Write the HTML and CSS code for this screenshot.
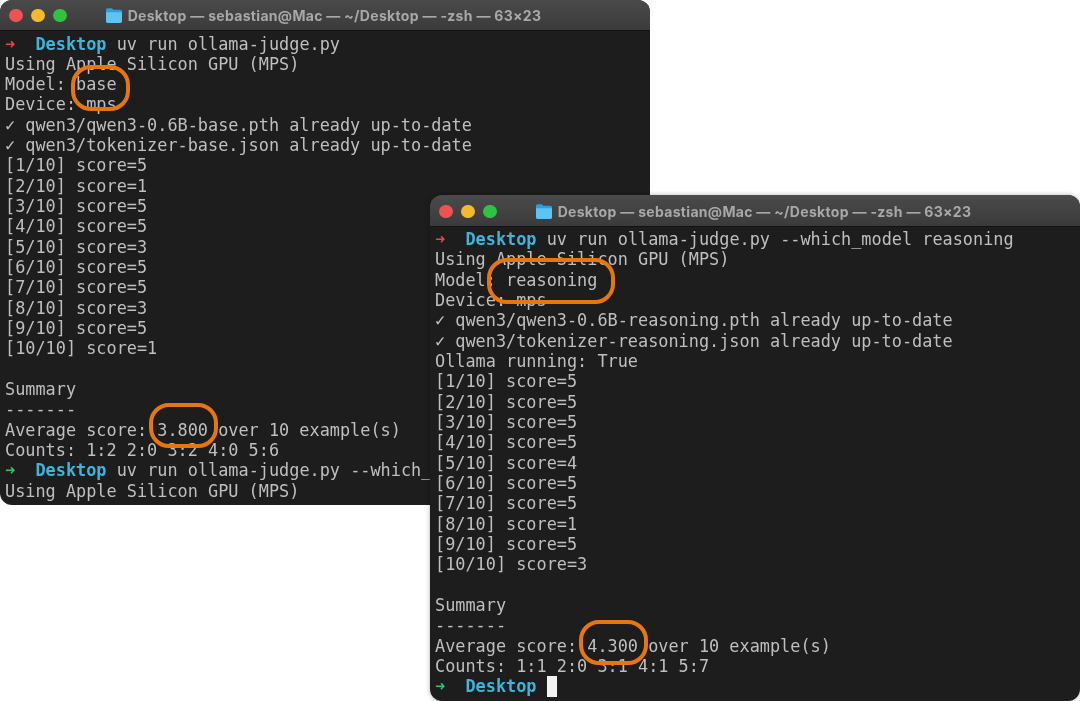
FILE: index.html
```html
<!DOCTYPE html>
<html lang="en">
<head>
<meta charset="utf-8">
<title>Terminal comparison</title>
<link rel="stylesheet" href="styles.css">
</head>
<body>
<main class="desktop">
  <section class="window window-base">
    <header class="titlebar">
      <span class="lights"><i class="light red"></i><i class="light yellow"></i><i class="light green"></i></span>
      <span class="title">
        <svg class="folder" viewBox="0 0 16 15"><path d="M0 2.2C0 1 .8.3 1.9.3h3.4c.7 0 1 .2 1.4.7l.6.8H14c1.200 0 2 .7 2 1.800v9.500c0 1.100-.8 1.900-2 1.900H2c-1.200 0-2-.8-2-1.900z" fill="#2f9fd8"/><path d="M0 4.300h16v9c0 1-.8 1.700-2 1.700H2c-1.200 0-2-.7-2-1.700z" fill="#5cc4f0"/></svg>
        <span>Desktop — sebastian@Mac — ~/Desktop — -zsh — 63×23</span>
      </span>
    </header>
<pre class="term"><span class="arrow-red">➜</span>  <b class="dir">Desktop</b> uv run ollama-judge.py
Using Apple Silicon GPU (MPS)
Model: base
Device: mps
✓ qwen3/qwen3-0.6B-base.pth already up-to-date
✓ qwen3/tokenizer-base.json already up-to-date
[1/10] score=5
[2/10] score=1
[3/10] score=5
[4/10] score=5
[5/10] score=3
[6/10] score=5
[7/10] score=5
[8/10] score=3
[9/10] score=5
[10/10] score=1

Summary
-------
Average score: 3.800 over 10 example(s)
Counts: 1:2 2:0 3:2 4:0 5:6
<span class="arrow-green">➜</span>  <b class="dir">Desktop</b> uv run ollama-judge.py --which_model reasoning
Using Apple Silicon GPU (MPS)</pre>
    <span class="ring ring-base"></span>
    <span class="ring ring-score"></span>
  </section>

  <section class="window window-reasoning">
    <header class="titlebar">
      <span class="lights"><i class="light red"></i><i class="light yellow"></i><i class="light green"></i></span>
      <span class="title">
        <svg class="folder" viewBox="0 0 16 15"><path d="M0 2.200C0 1 .8.3 1.900.3h3.400c.7 0 1 .2 1.400.7l.6.8H14c1.200 0 2 .7 2 1.800v9.500c0 1.100-.8 1.900-2 1.900H2c-1.200 0-2-.8-2-1.900z" fill="#2f9fd8"/><path d="M0 4.300h16v9c0 1-.8 1.700-2 1.700H2c-1.200 0-2-.7-2-1.700z" fill="#5cc4f0"/></svg>
        <span>Desktop — sebastian@Mac — ~/Desktop — -zsh — 63×23</span>
      </span>
    </header>
<pre class="term"><span class="arrow-red">➜</span>  <b class="dir">Desktop</b> uv run ollama-judge.py --which_model reasoning
Using Apple Silicon GPU (MPS)
Model: reasoning
Device: mps
✓ qwen3/qwen3-0.6B-reasoning.pth already up-to-date
✓ qwen3/tokenizer-reasoning.json already up-to-date
Ollama running: True
[1/10] score=5
[2/10] score=5
[3/10] score=5
[4/10] score=5
[5/10] score=4
[6/10] score=5
[7/10] score=5
[8/10] score=1
[9/10] score=5
[10/10] score=3

Summary
-------
Average score: 4.300 over 10 example(s)
Counts: 1:1 2:0 3:1 4:1 5:7
<span class="arrow-green">➜</span>  <b class="dir">Desktop</b> <i class="cursor"></i></pre>
    <span class="ring ring-reasoning"></span>
    <span class="ring ring-score2"></span>
  </section>
</main>
</body>
</html>
```
FILE: styles.css
```css
* { box-sizing: border-box; }
html, body { margin: 0; height: 100%; background: #fff; overflow: hidden; }
.desktop { position: relative; width: 1080px; height: 701px; overflow: hidden; }

.window {
  position: absolute;
  width: 650px;
  background: #1d1d1d;
  border-radius: 12px;
  overflow: hidden;
}
.window-base { left: 0; top: 0; height: 505px; }
.window-reasoning { left: 430px; top: 195px; height: 506px; box-shadow: 0 0 5px rgba(0,0,0,.3); }

.titlebar {
  position: relative;
  display: flex;
  align-items: center;
  justify-content: center;
  height: 31px;
  padding-top: 1px;
  background: linear-gradient(#4a4a4a, #3b3b3b);
  border-bottom: 1px solid #111;
}
.window-reasoning .titlebar { height: 32px; padding-top: 2px; }
.lights { position: absolute; left: 9px; top: 8.5px; display: flex; gap: 8.500px; }
.window-reasoning .lights { top: 9.500px; }
.light { display: block; width: 13.500px; height: 13.500px; border-radius: 50%; }
.red { background: #ef5350; }
.yellow { background: #f5b92e; }
.green { background: #2fc440; }

.title {
  display: flex;
  align-items: center;
  gap: 6px;
  margin-left: -3px;
  font: 700 14px/1 "Inter", "Liberation Sans", sans-serif;
  letter-spacing: .31px;
  color: #a8a8a8;
  white-space: nowrap;
  filter: blur(.4px);
}
.folder { width: 16px; height: 15px; flex: none; }

.term {
  margin: 0;
  padding: 2.500px 0 0 5px;
  font-family: "DejaVu Sans Mono", monospace;
  font-size: 16.880px;
  line-height: 20.330px;
  color: #bfbfbf;
  white-space: pre;
  filter: blur(.55px);
}
.window-reasoning .term { padding-top: 2px; }
.dir { color: #3cb6dc; font-weight: 700; }
.arrow-red { color: #e8483c; font-weight: 700; }
.arrow-green { color: #2ec56f; font-weight: 700; }
.cursor {
  display: inline-block;
  width: 10px;
  height: 21px;
  background: #f2f2f2;
  vertical-align: -5px;
}

.ring {
  position: absolute;
  border: 4px solid #e7760f;
  border-radius: 20px;
  filter: blur(.3px);
}
.ring-base { left: 71px; top: 65px; width: 59px; height: 46px; }
.ring-score { left: 149px; top: 403px; width: 69px; height: 45px; }
.ring-reasoning { left: 57px; top: 63px; width: 128px; height: 46px; }
.ring-score2 { left: 149px; top: 425px; width: 69px; height: 45px; }
```
